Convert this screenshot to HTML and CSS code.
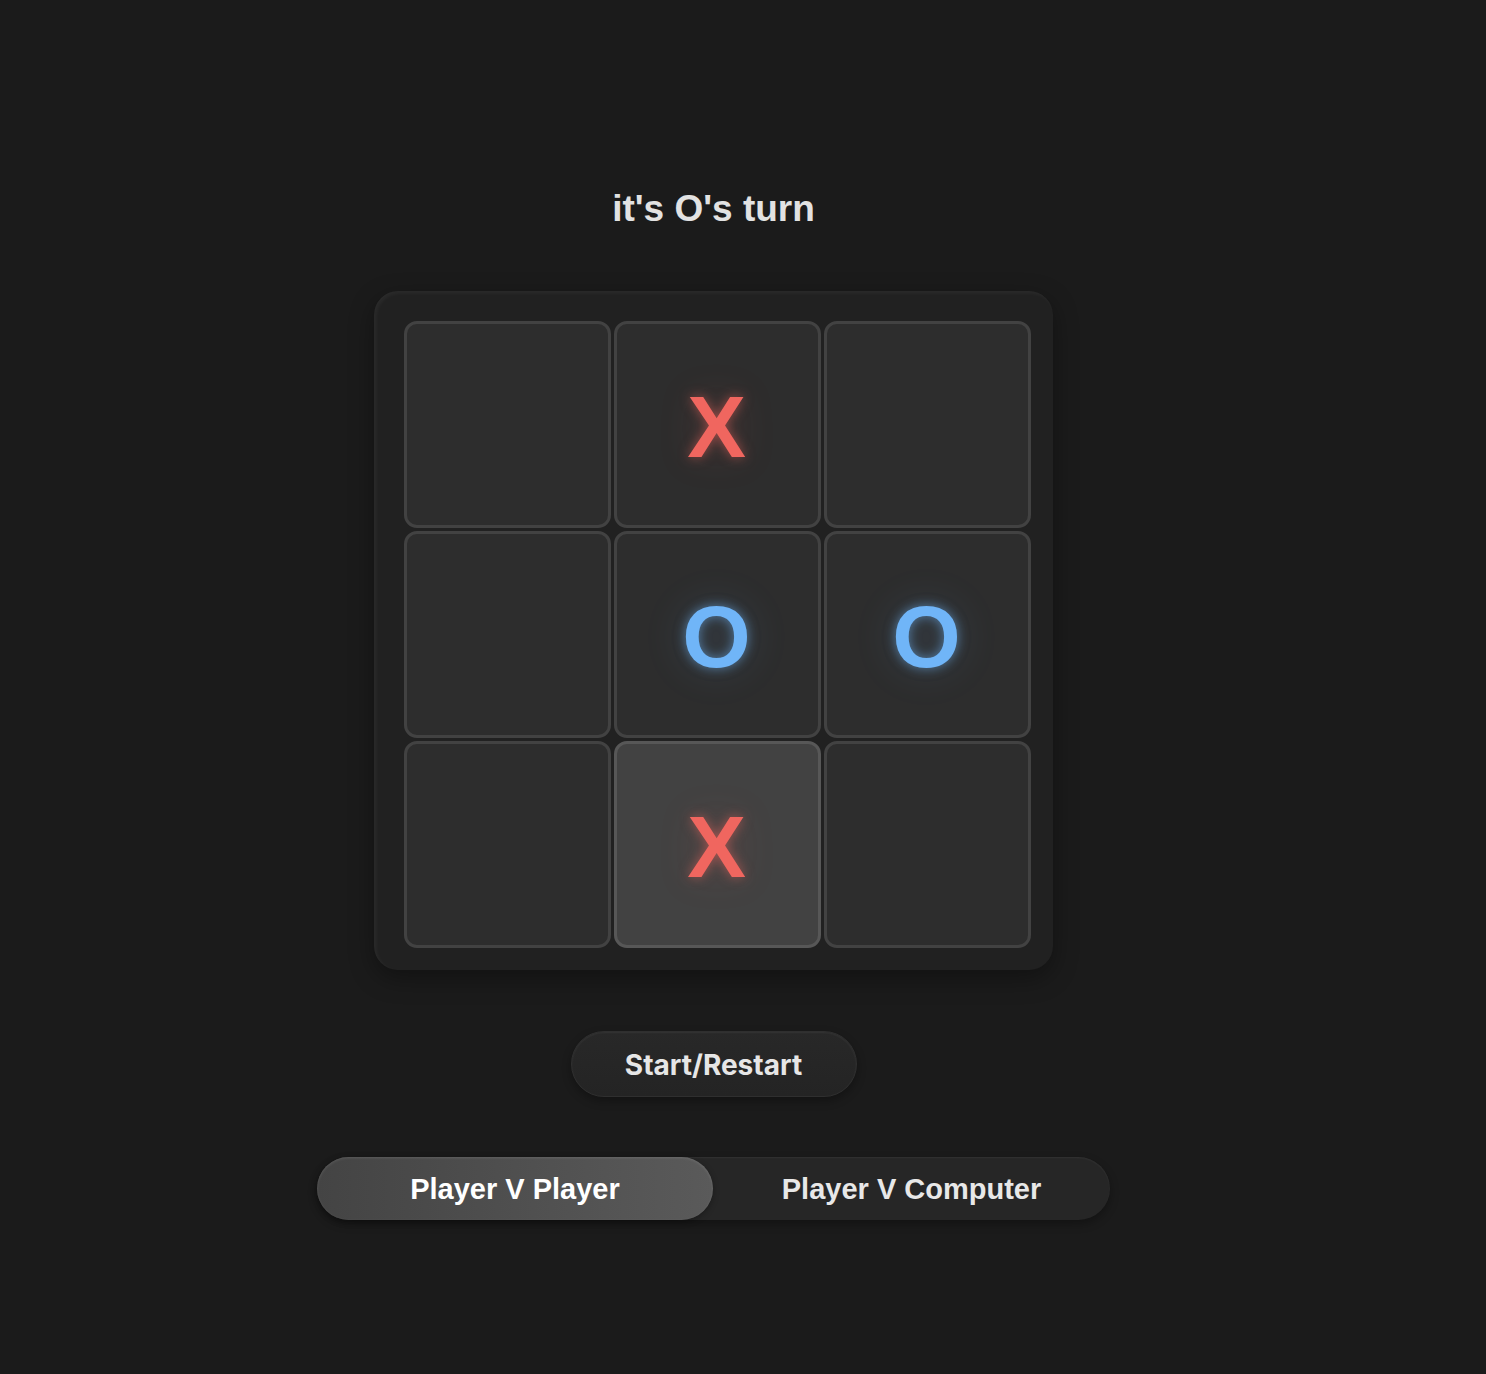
FILE: index.html
```html
<!DOCTYPE html>
<html lang="en">
<head>
<meta charset="utf-8">
<title>Tic Tac Toe</title>
<link rel="stylesheet" href="styles.css">
</head>
<body>
<main class="app">
  <h1 class="status">it's O's turn</h1>
  <div class="board">
    <div class="cell"></div>
    <div class="cell"><span class="mark x">X</span></div>
    <div class="cell"></div>
    <div class="cell"></div>
    <div class="cell"><span class="mark o">O</span></div>
    <div class="cell"><span class="mark o">O</span></div>
    <div class="cell"></div>
    <div class="cell active"><span class="mark x">X</span></div>
    <div class="cell"></div>
  </div>
  <button class="restart">Start/Restart</button>
  <div class="mode-toggle">
    <button class="mode selected">Player V Player</button>
    <button class="mode">Player V Computer</button>
  </div>
</main>
</body>
</html>
```
FILE: styles.css
```css
html, body {
  margin: 0;
  padding: 0;
  background: #1b1b1b;
  height: 100%;
}
.app {
  width: 1427px;
  display: flex;
  flex-direction: column;
  align-items: center;
  padding-top: 188px;
  font-family: "Liberation Sans", Arial, sans-serif;
}
.status {
  margin: 0 0 61px;
  font-size: 37px;
  line-height: 42px;
  font-weight: 700;
  color: #e2e2e2;
}
.board {
  box-sizing: border-box;
  width: 679px;
  height: 679px;
  padding: 30px 22px 22px 30px;
  background: #212121;
  border-radius: 24px;
  display: grid;
  grid-template-columns: repeat(3, 207px);
  grid-template-rows: repeat(3, 207px);
  gap: 3px;
  box-shadow: inset 2px 2px 4px rgba(255,255,255,0.05), 0 8px 24px rgba(0,0,0,0.35);
}
.cell {
  box-sizing: border-box;
  background: #2d2d2d;
  border: 3px solid #424242;
  border-radius: 13px;
  display: flex;
  align-items: center;
  justify-content: center;
}
.cell.active {
  background: #424242;
  border-color: #575757;
}
.mark {
  font-family: "Liberation Sans", Arial, sans-serif;
  font-weight: 700;
  font-size: 88px;
  line-height: 1;
  margin-top: 4px;
  margin-right: 2px;
}
.mark.x {
  color: #f0665f;
  text-shadow: 0 0 12px rgba(240,102,95,0.55), 0 0 40px rgba(240,102,95,0.18);
}
.mark.o {
  color: #70b5f8;
  text-shadow: 0 0 12px rgba(112,181,248,0.6), 0 0 44px rgba(112,181,248,0.2);
}
.restart {
  margin-top: 61px;
  width: 286px;
  height: 66px;
  border-radius: 33px;
  border: 1px solid #2f2f2f;
  background: linear-gradient(180deg, #282828, #242424);
  box-shadow: inset 0 1px 2px rgba(255,255,255,0.06), 0 4px 10px rgba(0,0,0,0.3);
  color: #e6e6e6;
  font-family: Inter, "Noto Sans", sans-serif;
  font-weight: 700;
  font-size: 28px;
  padding: 2px 0 0;
  cursor: pointer;
}
.mode-toggle {
  margin-top: 60px;
  width: 793px;
  height: 63px;
  border-radius: 32px;
  background: #262626;
  box-shadow: inset 0 1px 2px rgba(255,255,255,0.06), 0 4px 10px rgba(0,0,0,0.3);
  display: grid;
  grid-template-columns: 396px 1fr;
}
.mode {
  border: none;
  background: transparent;
  color: #e8e8e8;
  font-family: "Liberation Sans", Arial, sans-serif;
  font-weight: 700;
  font-size: 29px;
  padding: 2px 0 0;
  border-radius: 32px;
  cursor: pointer;
}
.mode.selected {
  color: #ffffff;
  background: linear-gradient(90deg, #444 0%, #4f4f4f 50%, #5a5a5a 100%);
  box-shadow: inset 0 1px 3px rgba(255,255,255,0.12), 0 2px 6px rgba(0,0,0,0.3);
}
```
